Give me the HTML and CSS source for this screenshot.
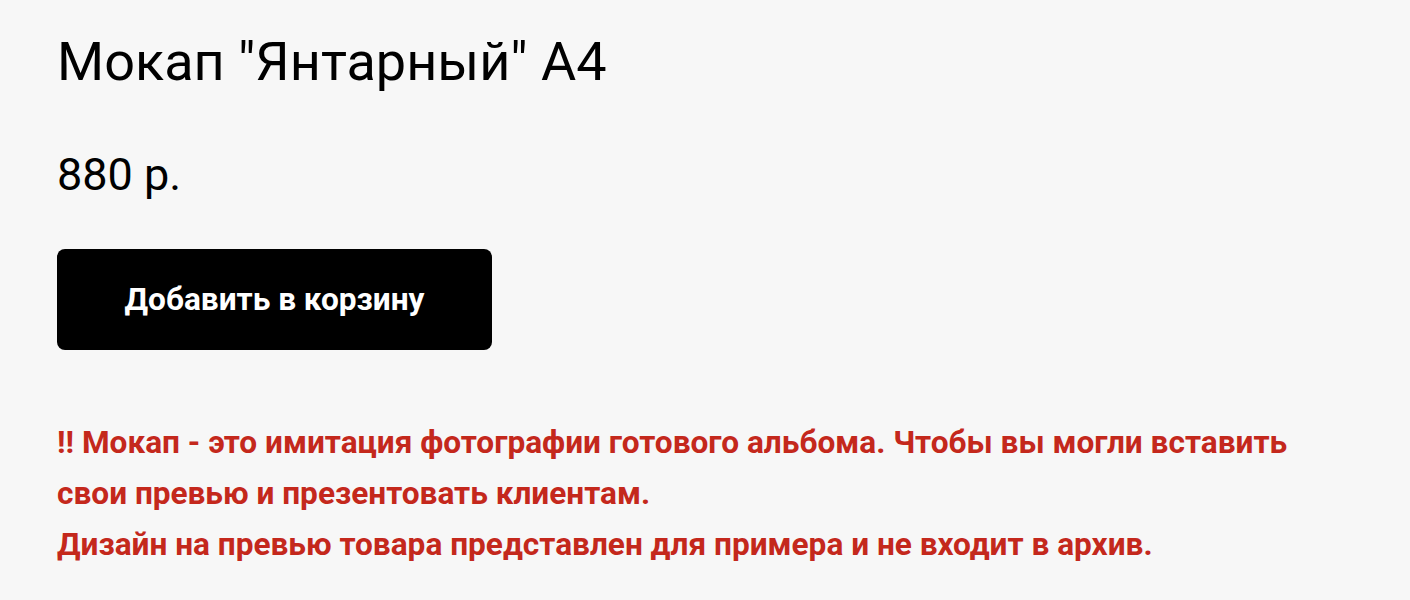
FILE: index.html
```html
<!DOCTYPE html>
<html>
<head>
    <meta http-equiv="Content-Type" content="text/html;charset=UTF-8"/>
    <title>Мокап "Янтарный" А4</title>
    <link rel="stylesheet" href="styles.css">
</head>
<body>
<div class="product">
    <h1 class="product-title">Мокап "Янтарный" А4</h1>
    <div class="product-price">880 р.</div>
    <button class="cart-button">Добавить в корзину</button>
    <p class="product-note">!! Мокап - это имитация фотографии готового альбома. Чтобы вы могли вставить свои превью и презентовать клиентам.<br>Дизайн на превью товара представлен для примера и не входит в архив.</p>
</div>
</body>
</html>
```

FILE: styles.css
```css
body {
    font-family: Roboto, "Liberation Sans", Arial, sans-serif;
    background-color: #f7f7f7;
    margin: 0;
    padding: 0;
}

.product {
    padding: 30px 56px 0 57px;
    max-width: 1260px;
}

.product-title {
    font-size: 54px;
    font-weight: 400;
    line-height: 1.2;
    color: #000;
    margin: 0;
}

.product-price {
    font-size: 45px;
    line-height: 1.2;
    color: #000;
    margin-top: 53px;
}

.cart-button {
    display: block;
    margin-top: 47px;
    width: 435px;
    height: 101px;
    background-color: #000;
    color: #fff;
    border: none;
    border-radius: 8px;
    font-family: inherit;
    font-size: 31.6px;
    font-weight: 700;
    cursor: pointer;
}

.product-note {
    font-size: 31.6px;
    font-weight: 700;
    line-height: 51px;
    color: #c4281c;
    margin: 67px 0 0 0;
}
```
